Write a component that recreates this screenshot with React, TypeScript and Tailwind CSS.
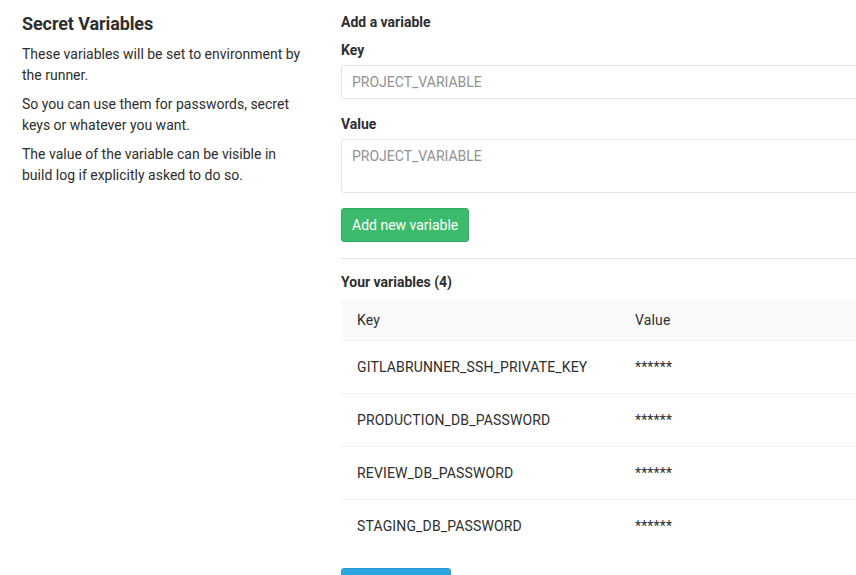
const variables = [
  'GITLABRUNNER_SSH_PRIVATE_KEY',
  'PRODUCTION_DB_PASSWORD',
  'REVIEW_DB_PASSWORD',
  'STAGING_DB_PASSWORD',
];

export default function App() {
  return (
    <div
      className="h-[575px] w-[856px] overflow-hidden bg-white text-[14px] text-[#2e2e2e]"
      style={{ fontFamily: 'Roboto, "Liberation Sans", sans-serif' }}
    >
      <div className="flex gap-[35px] pl-[22px]">
        <div className="w-[284px] shrink-0">
          <h4 className="mt-[14px] mb-[10px] text-[18px] font-bold leading-[20px] tracking-[-0.1px] text-[#2e2e2e]">
            Secret Variables
          </h4>
          <p className="mb-[9px] leading-[20.5px]">
            These variables will be set to environment by the runner.
          </p>
          <p className="mb-[9px] leading-[20.5px]">
            So you can use them for passwords, secret keys or whatever you want.
          </p>
          <p className="mb-[9px] leading-[20.5px]">
            The value of the variable can be visible in build log if explicitly asked to do so.
          </p>
        </div>

        <div className="w-[640px] shrink-0">
          <h5 className="mt-[12px] text-[14px] font-bold leading-[20px]">Add a variable</h5>
          <form className="mt-[8px]">
            <label className="block text-[14px] font-bold leading-[20px]">Key</label>
            <input
              className="mt-[5px] block h-[34px] w-full rounded-[3px] border border-[#e5e5e5] px-[10px] text-[14px] placeholder:text-[#919191] focus:outline-none"
              placeholder="PROJECT_VARIABLE"
            />
            <label className="mt-[15px] block text-[14px] font-bold leading-[20px]">Value</label>
            <textarea
              className="mt-[5px] block h-[54px] w-full resize-none rounded-[3px] border border-[#e5e5e5] px-[10px] py-[6px] text-[14px] leading-[20px] placeholder:text-[#919191] focus:outline-none"
              placeholder="PROJECT_VARIABLE"
            />
            <button
              type="button"
              className="mt-[15px] h-[34px] rounded-[3px] border border-[#33a862] bg-[#3cbb6c] px-[10px] text-[14px] text-white"
            >
              Add new variable
            </button>
          </form>

          <hr className="mt-[16px] border-t border-[#e5e5e5]" />

          <h5 className="mt-[13px] text-[14px] font-bold leading-[20px]">Your variables (4)</h5>
          <table className="mt-[8px] w-full border-collapse text-left tracking-[0.15px]">
            <thead>
              <tr className="h-[40px] border-b border-[#f0f0f0] bg-[#fafafa]">
                <th className="w-[278px] pl-[16px] pt-[2px] font-normal">Key</th>
                <th className="pl-[16px] pt-[2px] font-normal">Value</th>
              </tr>
            </thead>
            <tbody>
              {variables.map((v) => (
                <tr key={v} className="h-[53px] border-b border-[#f0f0f0] last:border-b-0">
                  <td className="pl-[16px] pt-[2px]">{v}</td>
                  <td className="pl-[16px] pt-[2px]">******</td>
                </tr>
              ))}
            </tbody>
          </table>

          <button
            type="button"
            className="mt-[16px] h-[34px] w-[110px] rounded-[3px] border border-[#2a9ad4] bg-[#2ba6e1] text-[14px] text-white"
          >
            Save changes
          </button>
        </div>
      </div>
    </div>
  );
}
